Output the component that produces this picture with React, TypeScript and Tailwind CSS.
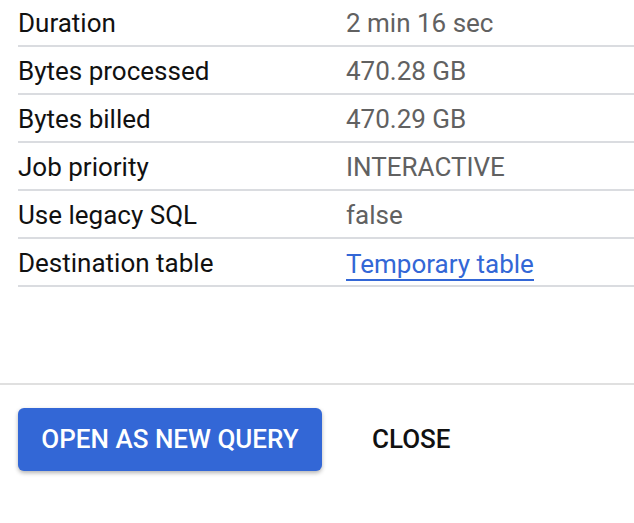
import React from 'react';

const rows: { label: string; value: string; link?: boolean }[] = [
  { label: 'Duration', value: '2 min 16 sec' },
  { label: 'Bytes processed', value: '470.28 GB' },
  { label: 'Bytes billed', value: '470.29 GB' },
  { label: 'Job priority', value: 'INTERACTIVE' },
  { label: 'Use legacy SQL', value: 'false' },
  { label: 'Destination table', value: 'Temporary table', link: true },
];

export default function App() {
  return (
    <div className="w-[634px] h-[523px] bg-white overflow-hidden font-['Roboto',sans-serif]">
      {/* Job details */}
      <div className="pl-[18px] -mt-px">
        {rows.map(r => (
          <div key={r.label} className="h-12 pt-[2px] flex items-center border-b-2 border-[#dadce0] text-[26px]">
            <div className="w-[328px] text-[#111]">{r.label}</div>
            {r.link ? (
              <span className="text-[#3367d6] border-b-2 border-[#3367d6] leading-[30px] mt-[4px]">{r.value}</span>
            ) : (
              <div className="text-[#616161]">{r.value}</div>
            )}
          </div>
        ))}
      </div>

      <div className="h-[96px]" />

      {/* Actions */}
      <div className="border-t-2 border-[#e0e0e0] pt-[23px] pl-[18px] flex items-center gap-[50px]">
        <button className="h-[63px] w-[304px] rounded-[6px] bg-[#3367d6] text-white text-[26px] font-medium uppercase shadow-[0_2px_4px_rgba(0,0,0,0.3)]">
          Open as new query
        </button>
        <button className="text-[26px] font-medium uppercase text-[#111]">
          Close
        </button>
      </div>
    </div>
  );
}
